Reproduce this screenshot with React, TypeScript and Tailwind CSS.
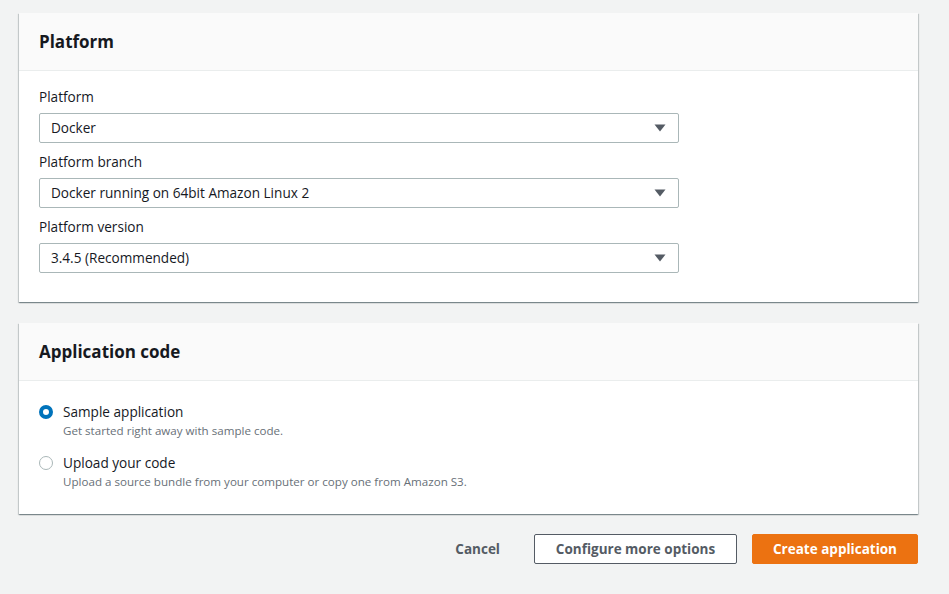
import { useState } from 'react';

const FONT = "font-['Open_Sans',Roboto,Arial,sans-serif]";

function Card({ title, children }: { title: string; children: React.ReactNode }) {
  return (
    <section className="bg-white shadow-[0_1px_1px_0_rgba(0,28,36,0.3),1px_1px_1px_0_rgba(0,28,36,0.15),-1px_1px_1px_0_rgba(0,28,36,0.15)]">
      <div className="flex h-[58px] items-center border-b border-[#eaeded] bg-[#fafafa] px-5">
        <h2 className="text-[17px] font-bold text-[#16191f]">{title}</h2>
      </div>
      {children}
    </section>
  );
}

function Select({ label, value }: { label: string; value: string }) {
  return (
    <label className="block">
      <span className="block text-[13.6px] leading-[22px] text-[#16191f]">{label}</span>
      <div className="mt-[5px] flex h-[30px] w-[640px] items-center justify-between rounded-[2px] border border-[#aab7b8] bg-white pl-[11px] pr-[12px] text-[13.6px] text-[#16191f]">
        <span>{value}</span>
        <svg width="12" height="8" viewBox="0 0 12 8">
          <path d="M0.5 0.5 H11.5 L6 7.5 Z" fill="#545b64" />
        </svg>
      </div>
    </label>
  );
}

function Radio({
  checked,
  label,
  desc,
  onClick,
}: {
  checked: boolean;
  label: string;
  desc: string;
  onClick: () => void;
}) {
  return (
    <div className="flex cursor-pointer gap-[10px]" onClick={onClick}>
      <span
        className={
          checked
            ? 'mt-[4px] h-[14px] w-[14px] shrink-0 rounded-full border-[4px] border-[#0073bb] bg-white'
            : 'mt-[4px] h-[14px] w-[14px] shrink-0 rounded-full border border-[#aab7b8] bg-white'
        }
      />
      <div>
        <div className="text-[13.6px] leading-[22px] text-[#16191f]">{label}</div>
        <div className="text-[11.6px] leading-[16px] text-[#687078]">{desc}</div>
      </div>
    </div>
  );
}

export default function App() {
  const [source, setSource] = useState<'sample' | 'upload'>('sample');

  return (
    <div className={`min-h-[594px] bg-[#f2f3f3] pl-[19px] pr-[31px] pt-[13px] ${FONT}`}>
      <Card title="Platform">
        <div className="space-y-[8px] px-5 pb-[29px] pt-[15px]">
          <Select label="Platform" value="Docker" />
          <Select label="Platform branch" value="Docker running on 64bit Amazon Linux 2" />
          <Select label="Platform version" value="3.4.5 (Recommended)" />
        </div>
      </Card>

      <div className="mt-[21px]">
        <Card title="Application code">
          <div className="space-y-[13px] px-5 pb-[24px] pt-[20px]">
            <Radio
              checked={source === 'sample'}
              label="Sample application"
              desc="Get started right away with sample code."
              onClick={() => setSource('sample')}
            />
            <Radio
              checked={source === 'upload'}
              label="Upload your code"
              desc="Upload a source bundle from your computer or copy one from Amazon S3."
              onClick={() => setSource('upload')}
            />
          </div>
        </Card>
      </div>

      <div className="mt-[20px] flex items-center justify-end gap-[15px]">
        <button type="button" className="pl-5 pr-[19px] text-[13.5px] font-bold text-[#545b64]">
          Cancel
        </button>
        <button
          type="button"
          className="h-[30px] w-[203px] rounded-[2px] border border-[#545b64] bg-white text-[13.5px] font-bold text-[#545b64]"
        >
          Configure more options
        </button>
        <button
          type="button"
          className="h-[30px] w-[166px] rounded-[2px] border border-[#ec7211] bg-[#ec7211] text-[13.5px] font-bold text-white"
        >
          Create application
        </button>
      </div>
    </div>
  );
}
